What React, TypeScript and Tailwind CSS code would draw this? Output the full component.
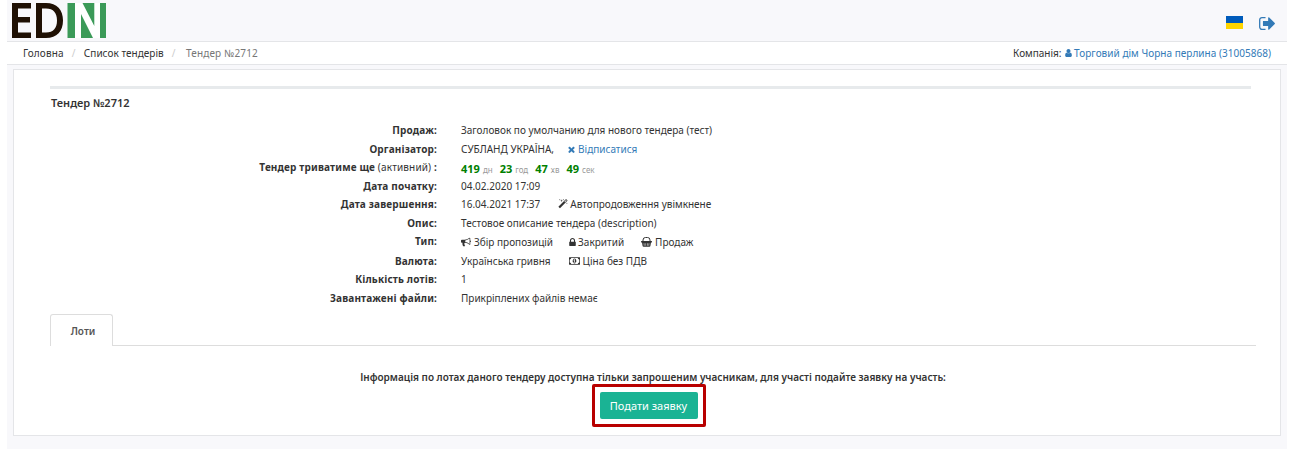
import type { ReactNode } from "react";

type GlyphProps = { d: string; className: string; box?: string };

function Glyph({ d, className, box = "0 0 1792 1792" }: GlyphProps) {
  return (
    <svg viewBox={box} className={className} fill="currentColor" aria-hidden="true">
      <path d={d} />
    </svg>
  );
}

const signOut =
  "M640 1312q0 4 1 20t.5 26.5-3 23.5-10 19.5-20.5 6.5h-320q-119 0-203.5-84.5t-84.5-203.5v-704q0-119 84.5-203.5t203.5-84.5h320q13 0 22.5 9.5t9.5 22.5q0 4 1 20t.5 26.5-3 23.5-10 19.5-20.5 6.5h-320q-66 0-113 47t-47 113v704q0 66 47 113t113 47h312l11.5 1 11.5 3 8 5.5 7 9 2 13.5zm928-544q0 26-19 45l-544 544q-19 19-45 19t-45-19-19-45v-288h-448q-26 0-45-19t-19-45v-384q0-26 19-45t45-19h448v-288q0-26 19-45t45-19 45 19l544 544q19 19 19 45z";
const user =
  "M1536 1399q0 109-62.5 187t-150.5 78h-854q-88 0-150.5-78t-62.5-187q0-85 8.5-160.5t31.5-152 58.5-131 94-89 134.5-34.5q131 128 313 128t313-128q76 0 134.5 34.5t94 89 58.5 131 31.5 152 8.5 160.5zm-256-887q0 159-112.5 271.5t-271.5 112.5-271.5-112.5-112.5-271.5 112.5-271.5 271.5-112.5 271.5 112.5 112.5 271.5z";
const times =
  "M1490 1322q0 40-28 68l-136 136q-28 28-68 28t-68-28l-294-294-294 294q-28 28-68 28t-68-28l-136-136q-28-28-28-68t28-68l294-294-294-294q-28-28-28-68t28-68l136-136q28-28 68-28t68 28l294 294 294-294q28-28 68-28t68 28l136 136q28 28 28 68t-28 68l-294 294 294 294q28 28 28 68z";
const magic =
  "M1254 581l293-293-107-107-293 293zm447-293q0 27-18 45l-1286 1286q-18 18-45 18t-45-18l-198-198q-18-18-18-45t18-45l1286-1286q18-18 45-18t45 18l198 198q18 18 18 45zm-1351-190l98 30-98 30-30 98-30-98-98-30 98-30 30-98zm350 162l196 60-196 60-60 196-60-196-196-60 196-60 60-196zm930 478l98 30-98 30-30 98-30-98-98-30 98-30 30-98zm-640-640l98 30-98 30-30 98-30-98-98-30 98-30 30-98z";
const lock =
  "M640 768h512v-192q0-106-75-181t-181-75-181 75-75 181v192zm832 96v576q0 40-28 68t-68 28h-960q-40 0-68-28t-28-68v-576q0-40 28-68t68-28h32v-192q0-184 132-316t316-132 316 132 132 316v192h32q40 0 68 28t28 68z";
const bullhorn =
  "M1664 640q53 0 90.5 37.5t37.5 90.5-37.5 90.5-90.5 37.5v384q0 52-38 90t-90 38q-417-347-812-380-58 19-91 66t-31 100.5 40 92.5q-20 33-23 65.5t6 58 33.5 55 48 50 61.5 50.5q-29 58-111.5 83t-168.5 11.5-132-55.5q-7-23-29.5-87.5t-32-94.5-23-89-15-101 3.5-98.5 22-110.5h-122q-66 0-113-47t-47-113v-192q0-66 47-113t113-47h480q435 0 896-384 52 0 90 38t38 90v384zm-128 604v-954q-394 302-768 343v270q377 42 768 341z";
const money =
  "M768 1152h384v-96h-128v-448h-114l-148 137 77 80q42-37 55-57h2v288h-128v96zm512-256q0 70-21 142t-59.5 134-101.5 101-138 39-138-39-101.5-101-59.5-134-21-142 21-142 59.5-134 101.5-101 138-39 138 39 101.5 101 59.5 134 21 142zm512 256v-512q-106 0-181-75t-75-181h-1152q0 106-75 181t-181 75v512q106 0 181 75t75 181h1152q0-106 75-181t181-75zm128-832v1152q0 26-19 45t-45 19h-1792q-26 0-45-19t-19-45v-1152q0-26 19-45t45-19h1792q26 0 45 19t19 45z";

function Basket({ className }: { className: string }) {
  return (
    <svg viewBox="0 0 11 10" className={className} fill="currentColor" aria-hidden="true">
      <path d="M2 4.500V3a2.500 2.500 0 0 1 2.500-2.500h2A2.500 2.500 0 0 1 9 3v1.500" fill="none" stroke="currentColor" />
      <path
        fillRule="evenodd"
        d="M.5 4h10a.5.5 0 0 1 .5.5v.500a.5.5 0 0 1-.5.5H10L9.400 9a1 1 0 0 1-1 .800H2.600a1 1 0 0 1-1-.800L1 5.500H.5A.5.5 0 0 1 0 5v-.500A.5.5 0 0 1 .5 4zM2.700 6.200l.2 2.500h.500l-.1-2.500zM4.600 6.200v2.500h.500V6.200zM6.100 6.200v2.500h.500V6.200zM7.700 6.200l-.1 2.500h.500l.2-2.500z"
      />
    </svg>
  );
}

function Logo() {
  return (
    <svg viewBox="0 0 94 35" className="h-[35px] w-[94px]" aria-label="EDIN">
      <path d="M0 0h19v5.500H6V14h12v5.500H6V29.500h13V35H0z" fill="#1f1004" />
      <path
        fillRule="evenodd"
        d="M24 0h10C45 0 51 7 51 17.500S45 35 34 35H24zM30 5.500v24h4c7.500 0 11-4.500 11-12s-3.500-12-11-12z"
        fill="#1f1004"
      />
      <path d="M55.500 0H94v35H55.500z" fill="#3b9a58" />
      <path d="M63 35V0h7.500l11.800 23V0H88v35h-7L69 11v24z" fill="#fff" />
    </svg>
  );
}

type RowProps = { label: ReactNode; children: ReactNode; short?: boolean; raised?: boolean; lowered?: boolean };

function Row({ label, children, short, raised, lowered }: RowProps) {
  return (
    <div className={short ? "flex h-[18px] items-start" : "flex h-[19px] items-start"}>
      <div className={`mr-6 w-[387px] text-right font-bold tracking-[0.15px] ${raised ? "-mt-px" : ""}`}>{label}</div>
      <div className={`flex items-center ${lowered ? "mt-[2px]" : ""}`}>{children}</div>
    </div>
  );
}

function Countdown({ value, unit }: { value: string; unit: string }) {
  return (
    <span className="mr-[7px] flex items-baseline gap-[3px]">
      <b className="text-[11px] text-[#008000]">{value}</b>
      <span className="text-[8px] text-[#999]">{unit}</span>
    </span>
  );
}

export default function App() {
  return (
    <div className="h-[449px] w-[1295px] overflow-hidden bg-white pr-2 pl-[7px] font-['Noto_Sans',sans-serif] text-[10px] leading-[18px] whitespace-nowrap text-[#333]">
      <div className="flex h-full flex-col bg-[#f8f8fb]">
        <header className="flex h-[42px] shrink-0 items-start border-b border-[#e4e5e8] pt-[3px] pr-3 pl-[5px]">
          <Logo />
          <div className="mt-[13px] ml-auto flex h-[13px] w-[17px] flex-col">
            <div className="h-[6.500px] bg-[#005bbb]" />
            <div className="h-[6.500px] bg-[#ffd500]" />
          </div>
          <Glyph d={signOut} box="0 128 1568 1280" className="mt-[14px] ml-4 h-[13px] w-4 text-[#337ab7]" />
        </header>
        <nav className="flex h-[23px] shrink-0 items-center border-b border-[#e4e5e8] bg-white pr-4 pl-4">
          <a className="tracking-[0.12px]">Головна</a>
          <span className="mr-[8.500px] ml-[8px] text-[#ccc]">/</span>
          <a className="tracking-[0.03px]">Список тендерів</a>
          <span className="mr-[10.500px] ml-[8px] text-[#ccc]">/</span>
          <span className="tracking-[0.15px] text-[#777]">Тендер №2712</span>
          <span className="ml-auto">Компанія:</span>
          <Glyph d={user} box="256 128 1280 1536" className="mr-[2.500px] ml-[3px] h-2 w-[7px] text-[#337ab7]" />
          <a className="tracking-[0.03px] text-[#337ab7]">Торговий дім Чорна перлина (31005868)</a>
        </nav>
        <main className="mx-[6px] mt-1 flex h-[367px] shrink-0 flex-col border border-[#e4e5e8] bg-white pr-6 pl-[36px]">
          <div className="mt-4 mr-[5px] h-[3px] bg-[#e7eaec]" />
          <h1 className="mt-[5px] ml-px text-[11px] font-semibold">Тендер №2712</h1>
          <section className="mt-[9px]">
            <Row label="Продаж:">Заголовок по умолчанию для нового тендера (тест)</Row>
            <Row label="Організатор:" short>
              СУБЛАНД УКРАЇНА,
              <a className="ml-[14px] flex items-center gap-[3px] text-[#337ab7]">
                <Glyph d={times} box="302 238 1188 1316" className="size-[7px]" />
                Відписатися
              </a>
            </Row>
            <Row
              lowered
              label={
                <>
                  Тендер триватиме ще <span className="font-normal">(активний)</span> :
                </>
              }
            >
              <Countdown value="419" unit="дн" />
              <Countdown value="23" unit="год" />
              <Countdown value="47" unit="хв" />
              <Countdown value="49" unit="сек" />
            </Row>
            <Row label="Дата початку:" short>04.02.2020 17:09</Row>
            <Row label="Дата завершення:">
              16.04.2021 17:37
              <Glyph d={magic} className="mr-[2px] ml-[18px] size-[10px]" />
              Автопродовження увімкнене
            </Row>
            <Row label="Опис:">Тестовое описание тендера (description)</Row>
            <Row label="Тип:" raised>
              <Glyph d={bullhorn} className="mr-[3px] size-[10px]" />
              Збір пропозицій
              <Glyph d={lock} box="320 128 1152 1408" className="mr-[2px] ml-4 h-2 w-[7px]" />
              Закритий
              <Basket className="mr-[3px] ml-[17px] h-[10px] w-[11px]" />
              Продаж
            </Row>
            <Row label="Валюта:" short>
              Українська гривня
              <Glyph d={money} box="0 256 1920 1280" className="mr-[3px] ml-[18px] h-2 w-[11px]" />
              Ціна без ПДВ
            </Row>
            <Row label="Кількість лотів:">1</Row>
            <Row label="Завантажені файли:">Прикріплених файлів немає</Row>
          </section>
          <div className="mt-[6px] flex h-8 shrink-0">
            <div className="flex w-[63px] items-center justify-center rounded-t-[3px] border border-b-0 border-[#ddd] pl-[3px] font-semibold text-[#555]">
              Лоти
            </div>
            <div className="flex-1 border-b border-[#ddd]" />
          </div>
          <div className="mt-[22px] flex flex-col items-center">
            <p className="font-semibold">
              Інформація по лотах даного тендеру доступна тільки запрошеним учасникам, для участі подайте заявку на участь:
            </p>
            <div className="mt-[-2px] mr-[9px] rounded-[2px] border-3 border-[#b80000] p-[5px]">
              <button className="flex h-[27px] w-[98px] items-center justify-center rounded-[2px] bg-[#1ab394] text-[11px] text-white">
                Подати заявку
              </button>
            </div>
          </div>
        </main>
      </div>
    </div>
  );
}
